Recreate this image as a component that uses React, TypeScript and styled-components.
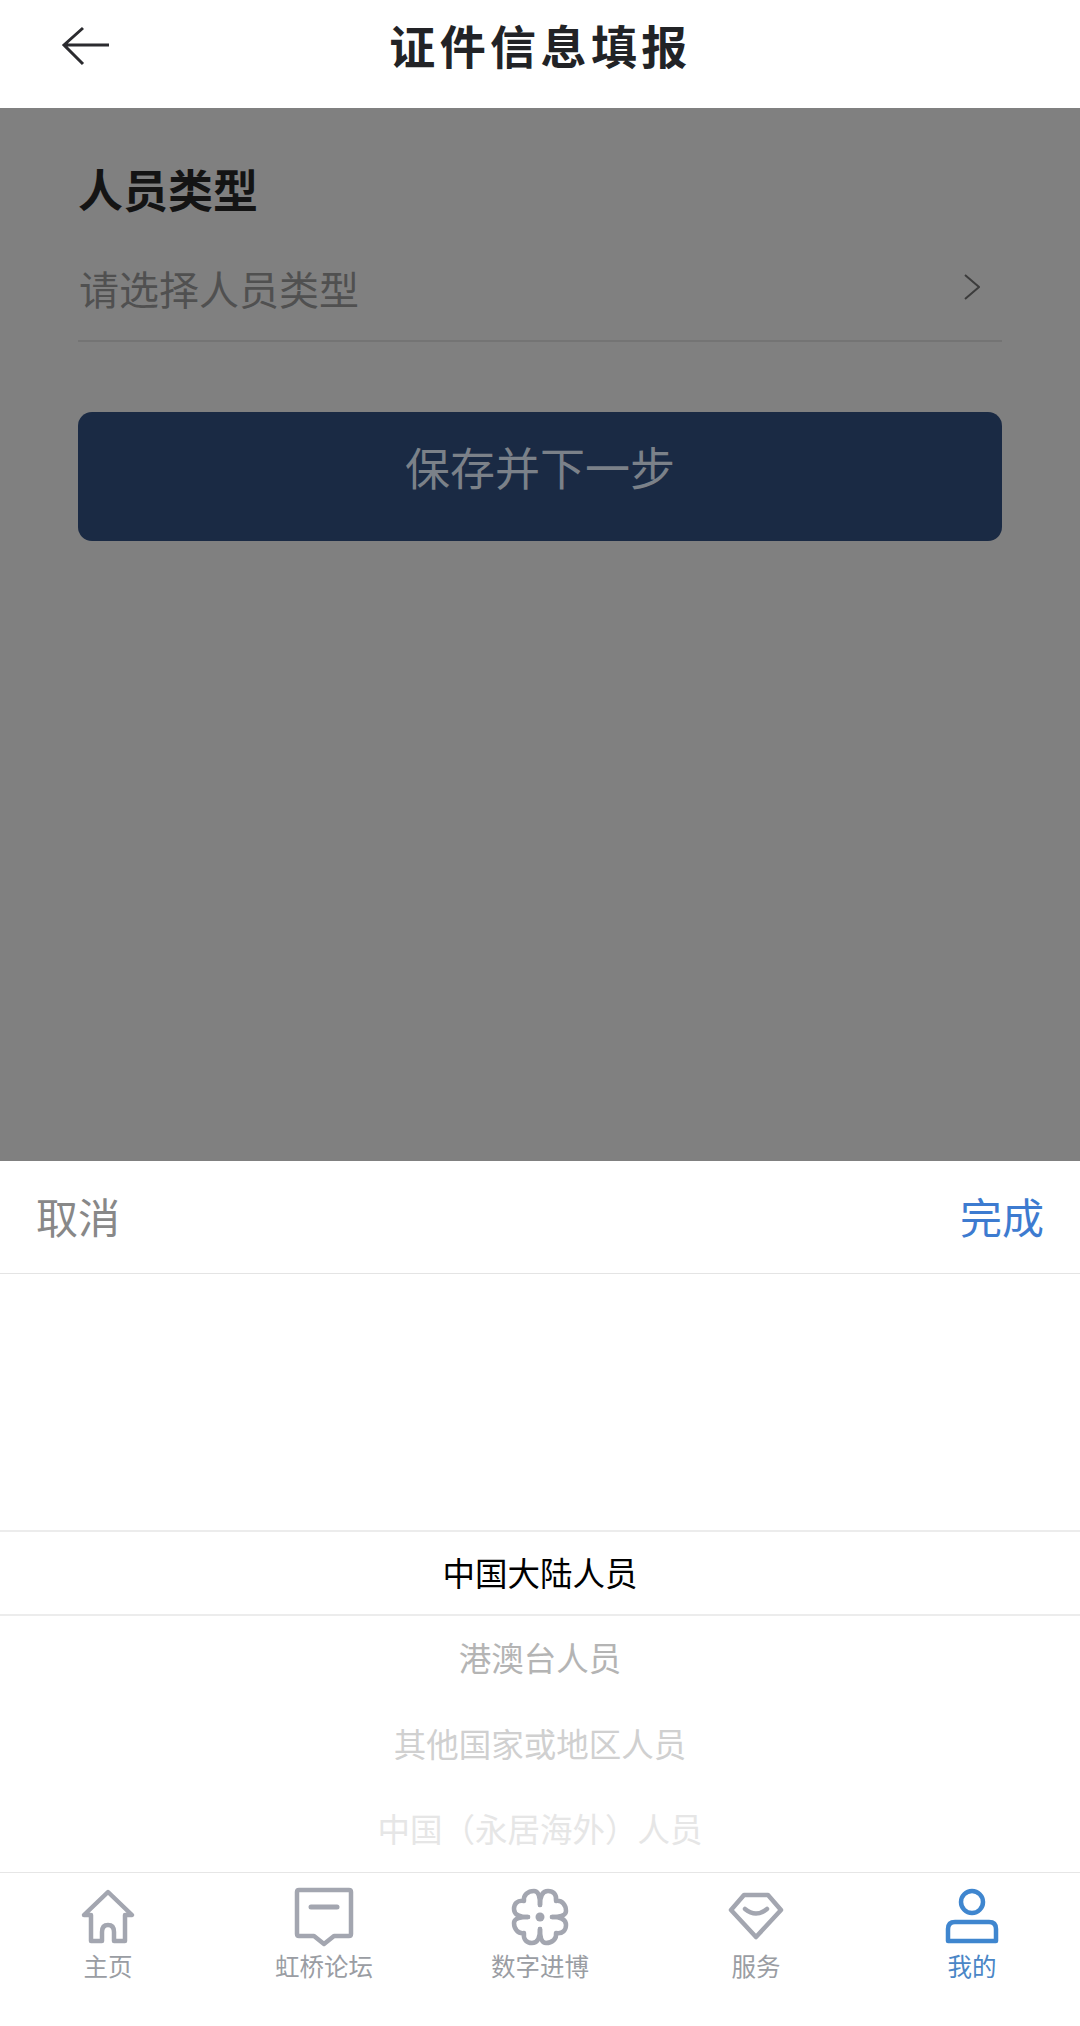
import styled, { createGlobalStyle } from 'styled-components';

const tabs = [
  { key: 'home', label: '主页' },
  { key: 'forum', label: '虹桥论坛' },
  { key: 'expo', label: '数字进博' },
  { key: 'service', label: '服务' },
  { key: 'mine', label: '我的', active: true },
];

const options = [
  { label: '中国大陆人员', tone: 'selected' },
  { label: '港澳台人员', tone: 'near' },
  { label: '其他国家或地区人员', tone: 'far' },
  { label: '中国（永居海外）人员', tone: 'farthest' },
] as const;

// one clover petal, repeated four times around the centre
const petal = 'M30 18 C30 10 32 4 38 4 C43 4 47 7 46 14 C52 13 56 18 56 24 C56 29 50 30 42 30';

const TabIcon = ({ name }: { name: string }) => {
  if (name === 'home') {
    return (
      <IconSvg viewBox="0 0 60 60">
        <path d="M6 28 L30 5 L54 28 H47 V54 H36 V45 Q36 38 30 38 Q24 38 24 45 V54 H13 V28 Z" />
      </IconSvg>
    );
  }
  if (name === 'forum') {
    return (
      <IconSvg viewBox="0 0 60 60">
        <path d="M3 5 Q3 3 5 3 H55 Q57 3 57 5 V47 Q57 49 55 49 H40 L30 57 L20 49 H5 Q3 49 3 47 Z" />
        <path d="M17 20 H43" strokeWidth="5" />
      </IconSvg>
    );
  }
  if (name === 'expo') {
    return (
      <IconSvg viewBox="0 0 60 60" strokeWidth="3.6">
        {[0, 90, 180, 270].map((angle) => (
          <path key={angle} d={petal} transform={`rotate(${angle} 30 30)`} />
        ))}
        <circle cx="30" cy="30" r="4.5" fill="currentColor" stroke="none" />
      </IconSvg>
    );
  }
  if (name === 'service') {
    return (
      <IconSvg viewBox="0 0 60 60">
        <path d="M18 8 H42 L55 23 L30 50 L5 23 Z" />
        <path d="M19 22 Q30 31 41 22" />
      </IconSvg>
    );
  }
  return (
    <IconSvg viewBox="0 0 60 60">
      <circle cx="30" cy="15" r="11" />
      <path d="M13 35 H47 Q54 35 54 42 V54 H6 V42 Q6 35 13 35 Z" />
    </IconSvg>
  );
};

export default function App() {
  return (
    <>
      <GlobalStyle />
      <Page>
        <Header>
          <BackIcon viewBox="0 0 50 40">
            <path d="M48 19 H3 M22 2 L3 19 L22 38" />
          </BackIcon>
          <Title>证件信息填报</Title>
        </Header>

        <FormArea>
          <FieldLabel>人员类型</FieldLabel>
          <SelectRow>
            <Placeholder>请选择人员类型</Placeholder>
            <Chevron viewBox="0 0 16 26">
              <path d="M1 1 L15 13 L1 25" />
            </Chevron>
          </SelectRow>
          <SaveButton>保存并下一步</SaveButton>
        </FormArea>

        <PickerSheet>
          <PickerBar>
            <BarAction>取消</BarAction>
            <BarAction $primary>完成</BarAction>
          </PickerBar>
          <PickerWheel>
            {options.map((opt) => (
              <WheelItem key={opt.label} $tone={opt.tone}>
                {opt.label}
              </WheelItem>
            ))}
          </PickerWheel>
        </PickerSheet>

        <TabBar>
          {tabs.map((tab) => (
            <TabItem key={tab.key} $active={tab.active}>
              <TabIcon name={tab.key} />
              <TabLabel>{tab.label}</TabLabel>
            </TabItem>
          ))}
        </TabBar>
      </Page>
    </>
  );
}

const GlobalStyle = createGlobalStyle`
  html, body {
    margin: 0;
    padding: 0;
    background: #fff;
  }
  * {
    box-sizing: border-box;
  }
`;

const Page = styled.div`
  width: 1080px;
  height: 2026px;
  display: flex;
  flex-direction: column;
  overflow: hidden;
  font-family: 'Noto Sans CJK SC', 'Noto Sans', sans-serif;
`;

const Header = styled.header`
  position: relative;
  height: 108px;
  flex: none;
  display: flex;
  align-items: center;
  justify-content: center;
  padding: 0 0 20px 1px;
  background: #fff;
`;

const BackIcon = styled.svg`
  position: absolute;
  left: 61px;
  top: 26px;
  width: 50px;
  height: 40px;
  fill: none;
  stroke: #2b2b2f;
  stroke-width: 3;
`;

const Title = styled.h1`
  margin: 0;
  font-size: 46px;
  line-height: 60px;
  font-weight: 700;
  letter-spacing: 4.4px;
  color: #222326;
`;

const FormArea = styled.main`
  flex: 1;
  display: flex;
  flex-direction: column;
  padding: 53px 78px 0;
  background: #808080;
`;

const FieldLabel = styled.div`
  font-size: 45px;
  line-height: 56px;
  font-weight: 700;
  color: #141414;
`;

const SelectRow = styled.div`
  display: flex;
  align-items: center;
  justify-content: space-between;
  height: 95px;
  margin-top: 30px;
  padding: 0 22px 0 1px;
  border-bottom: 2px solid #747474;
`;

const Placeholder = styled.span`
  font-size: 40px;
  line-height: 60px;
  margin-bottom: 11px;
  color: #505050;
`;

const Chevron = styled.svg`
  width: 16px;
  height: 26px;
  margin-bottom: 14px;
  fill: none;
  stroke: #3c3c3c;
  stroke-width: 2;
`;

const SaveButton = styled.div`
  height: 129px;
  margin-top: 70px;
  padding-bottom: 20px;
  display: flex;
  align-items: center;
  justify-content: center;
  border-radius: 14px;
  background: #1a2a44;
  color: #7b8189;
  font-size: 45px;
`;

const PickerSheet = styled.section`
  height: 712px;
  flex: none;
  display: flex;
  flex-direction: column;
  background: #fff;
`;

const PickerBar = styled.div`
  height: 113px;
  flex: none;
  display: flex;
  align-items: center;
  justify-content: space-between;
  padding: 0 36px 3px;
  border-bottom: 1px solid #e4e4e4;
`;

const BarAction = styled.span<{ $primary?: boolean }>`
  font-size: 42px;
  line-height: 60px;
  color: ${(props) => (props.$primary ? '#3d7bd0' : '#888888')};
`;

const PickerWheel = styled.div`
  flex: 1;
  display: flex;
  flex-direction: column;
  padding-top: 256px;
  border-bottom: 1px solid #e6e6e6;
`;

const toneColors = {
  selected: '#000000',
  near: '#b4b4b4',
  far: '#d0d0d0',
  farthest: '#e6e6e6',
};

const WheelItem = styled.div<{ $tone: keyof typeof toneColors }>`
  height: 85.5px;
  flex: none;
  display: flex;
  align-items: center;
  justify-content: center;
  padding-bottom: 3px;
  font-size: 32.5px;
  color: ${(props) => toneColors[props.$tone]};
  ${(props) =>
    props.$tone === 'selected' &&
    `
    border-top: 2px solid #ececec;
    border-bottom: 2px solid #ececec;
  `}
`;

const TabBar = styled.nav`
  height: 153px;
  flex: none;
  display: grid;
  grid-template-columns: repeat(5, 1fr);
  background: #fff;
`;

const TabItem = styled.div<{ $active?: boolean }>`
  display: flex;
  flex-direction: column;
  align-items: center;
  padding-top: 14px;
  color: ${(props) => (props.$active ? '#3f86cf' : '#a3a6b0')};

  span {
    color: ${(props) => (props.$active ? '#4a86c6' : '#9a9da3')};
  }
`;

const IconSvg = styled.svg`
  width: 60px;
  height: 60px;
  fill: none;
  stroke: currentColor;
  stroke-width: 4.5;
  stroke-linejoin: round;
  stroke-linecap: round;
`;

const TabLabel = styled.span`
  margin-top: 2px;
  font-size: 24.5px;
  line-height: 34px;
`;
